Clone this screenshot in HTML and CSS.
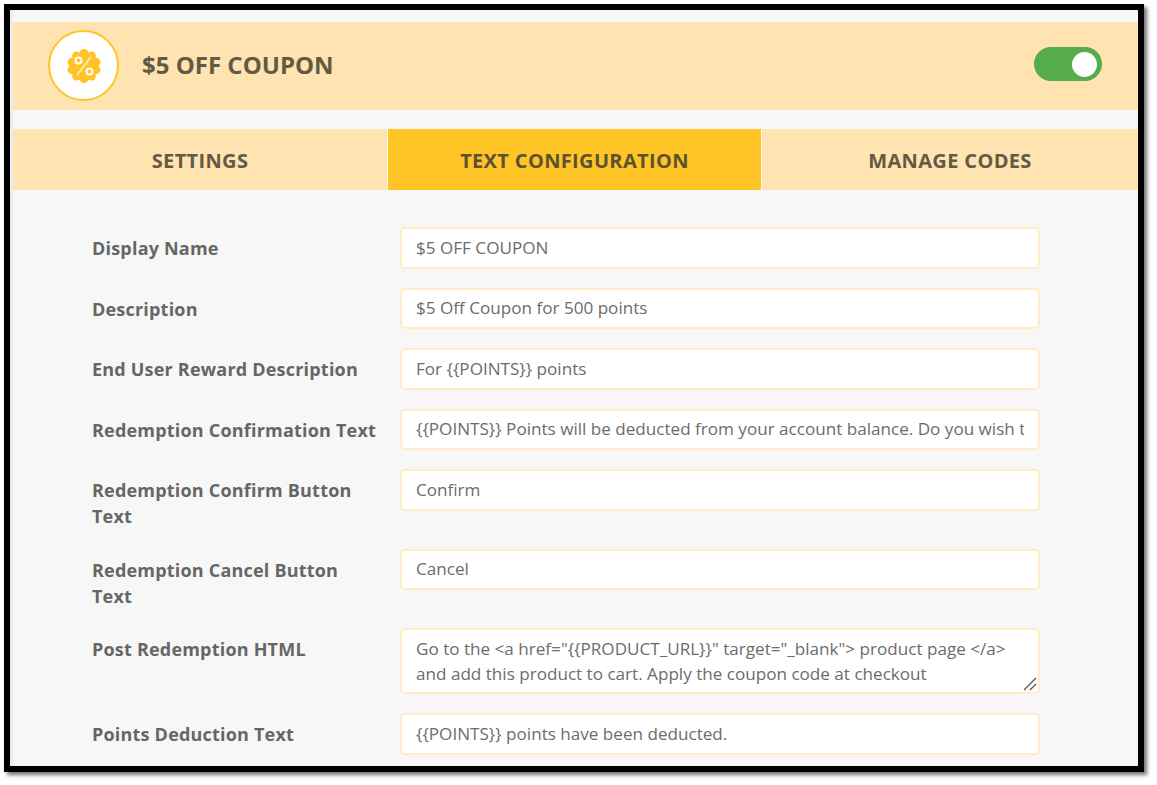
FILE: index.html
```html
<!DOCTYPE html>
<html lang="en">
<head>
<meta charset="utf-8">
<title>$5 OFF COUPON</title>
<link rel="stylesheet" href="styles.css">
</head>
<body>
<div class="frame">
  <div class="panel">
    <header class="head">
      <div class="badge">
        <svg class="badge-icon" viewBox="0 0 34 34">
          <g fill="#ffc425">
            <circle cx="17" cy="17" r="13.500"/>
            <circle cx="17" cy="4.500" r="4.500"/>
            <circle cx="24.350" cy="6.900" r="4.500"/>
            <circle cx="28.900" cy="13.140" r="4.500"/>
            <circle cx="28.900" cy="20.860" r="4.500"/>
            <circle cx="24.350" cy="27.100" r="4.500"/>
            <circle cx="17" cy="29.500" r="4.500"/>
            <circle cx="9.650" cy="27.100" r="4.500"/>
            <circle cx="5.100" cy="20.860" r="4.500"/>
            <circle cx="5.100" cy="13.140" r="4.500"/>
            <circle cx="9.650" cy="6.900" r="4.500"/>
          </g>
          <path d="M23.500 8.500 10.500 25.500" stroke="#ffe9b8" stroke-width="2" fill="none" stroke-linecap="round"/>
          <circle cx="11.500" cy="11.500" r="3" fill="none" stroke="#fff" stroke-width="1.900"/>
          <circle cx="22.500" cy="22.500" r="3" fill="none" stroke="#fff" stroke-width="1.900"/>
        </svg>
      </div>
      <h1 class="title">$5 OFF COUPON</h1>
      <div class="toggle"><span class="knob"></span></div>
    </header>
    <nav class="tabs">
      <div class="tab">SETTINGS</div>
      <div class="tab tab-active">TEXT CONFIGURATION</div>
      <div class="tab">MANAGE CODES</div>
    </nav>
    <form class="form">
      <div class="row"><label class="label">Display Name</label><input class="field" type="text" value="$5 OFF COUPON"></div>
      <div class="row"><label class="label">Description</label><input class="field" type="text" value="$5 Off Coupon for 500 points"></div>
      <div class="row"><label class="label">End User Reward Description</label><input class="field" type="text" value="For {{POINTS}} points"></div>
      <div class="row"><label class="label">Redemption Confirmation Text</label><input class="field" type="text" value="{{POINTS}} Points will be deducted from your account balance. Do you wish to continue?"></div>
      <div class="row"><label class="label">Redemption Confirm Button Text</label><input class="field" type="text" value="Confirm"></div>
      <div class="row"><label class="label">Redemption Cancel Button Text</label><input class="field" type="text" value="Cancel"></div>
      <div class="row"><label class="label">Post Redemption HTML</label>
        <div class="area-wrap">
          <textarea class="field area">Go to the &lt;a href="{{PRODUCT_URL}}" target="_blank"&gt; product page &lt;/a&gt; and add this product to cart. Apply the coupon code at checkout</textarea>
          <svg class="grip" width="14" height="14" viewBox="0 0 14 14"><path d="M1 13 13 1M7 13 13 7" stroke="#555" stroke-width="1.300" fill="none"/></svg>
        </div>
      </div>
      <div class="row"><label class="label">Points Deduction Text</label><input class="field" type="text" value="{{POINTS}} points have been deducted."></div>
    </form>
  </div>
</div>
</body>
</html>
```
FILE: styles.css
```css
* { box-sizing: border-box; }
html, body { margin: 0; height: 100%; background: #fff; overflow: hidden; }
body { padding: 4px 0 0 4px; font-family: "Open Sans", sans-serif; }
.frame {
  width: 1140px;
  height: 768px;
  border: 6px solid #000;
  box-shadow: 3px 3px 4px rgba(0,0,0,.55);
  background: #f7f7f7;
  overflow: hidden;
}
.panel { height: 100%; padding: 12px 0 0; border-left: 3px solid #ececec; }
.head {
  display: flex;
  align-items: center;
  height: 88px;
  padding: 0 36px 2px 35px;
  background: #ffe3b0;
}
.badge {
  display: flex;
  align-items: center;
  justify-content: center;
  flex: 0 0 71px;
  height: 71px;
  border: 2px solid #ffc425;
  border-radius: 50%;
  background: #fff;
}
.badge-icon { width: 34px; height: 34px; margin: 1px 0 0 0; }
.title {
  flex: 1;
  margin: 0 0 2px 23px;
  font-size: 24px;
  font-weight: 700;
  color: #625a45;
}
.toggle {
  display: flex;
  align-items: center;
  justify-content: flex-end;
  width: 68px;
  height: 34px;
  padding-right: 5px;
  border-radius: 17px;
  background: #56ab4c;
  margin-top: -2px;
}
.knob { width: 25px; height: 25px; border-radius: 50%; background: #fff; }
.tabs { display: flex; height: 61px; margin-top: 19px; gap: 1px; }
.tab {
  flex: 1;
  display: flex;
  align-items: center;
  justify-content: center;
  padding-top: 2px;
  background: #ffe3b0;
  font-size: 20px;
  font-weight: 700;
  letter-spacing: .35px;
  color: #625a45;
}
.tab:first-child { flex: 0 0 374px; }
.tab-active { flex: 0 0 373px; background: #ffc425; color: #5c5232; }
.form {
  display: flex;
  flex-direction: column;
  gap: 19px;
  padding: 37px 0 0 79px;
}
.row { display: flex; align-items: flex-start; }
.label {
  flex: 0 0 308px;
  padding: 8px 20px 0 0;
  font-size: 18px;
  line-height: 26.25px;
  font-weight: 700;
  letter-spacing: .2px;
  color: #666;
}
.field {
  flex: 0 0 640px;
  width: 640px;
  height: 41.500px;
  padding: 0 14px 1px;
  border: 2px solid #ffeec4;
  border-radius: 5px;
  background: #fff;
  font-family: "Open Sans", sans-serif;
  font-size: 17.100px;
  color: #6c6c6c;
  outline: none;
}
.area-wrap { position: relative; flex: 0 0 640px; height: 66px; }
.area {
  display: block;
  height: 66px;
  padding: 6px 14px;
  line-height: 25px;
  resize: none;
  overflow: hidden;
}
.grip { position: absolute; right: 3px; bottom: 3px; }
```
